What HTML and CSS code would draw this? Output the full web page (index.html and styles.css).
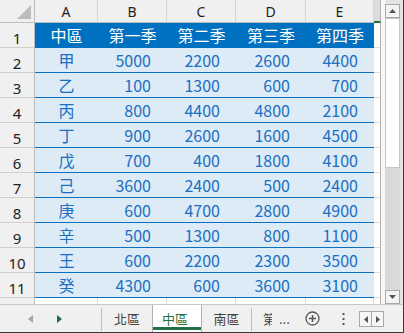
FILE: index.html
```html
<!DOCTYPE html>
<html lang="zh-Hant">
<head>
<meta charset="utf-8">
<link rel="stylesheet" href="styles.css">
</head>
<body>
<div class="app">
  <div class="main">
    <div class="sheet">
      <div class="c ch corner"><svg width="34" height="22" viewBox="0 0 34 22"><polygon points="31,5 31,19 17,19" fill="#bcbcbc"/></svg></div>
      <div class="c ch">A</div><div class="c ch">B</div><div class="c ch">C</div><div class="c ch">D</div><div class="c ch">E</div><div class="c fh"></div>

      <div class="c rh">1</div><div class="c hd">中區</div><div class="c hd">第一季</div><div class="c hd">第二季</div><div class="c hd">第三季</div><div class="c hd">第四季</div><div class="c f"></div>
      <div class="c rh">2</div><div class="c d t">甲</div><div class="c d">5000</div><div class="c d">2200</div><div class="c d">2600</div><div class="c d">4400</div><div class="c f"></div>
      <div class="c rh">3</div><div class="c d t">乙</div><div class="c d">100</div><div class="c d">1300</div><div class="c d">600</div><div class="c d">700</div><div class="c f"></div>
      <div class="c rh">4</div><div class="c d t">丙</div><div class="c d">800</div><div class="c d">4400</div><div class="c d">4800</div><div class="c d">2100</div><div class="c f"></div>
      <div class="c rh">5</div><div class="c d t">丁</div><div class="c d">900</div><div class="c d">2600</div><div class="c d">1600</div><div class="c d">4500</div><div class="c f"></div>
      <div class="c rh">6</div><div class="c d t">戊</div><div class="c d">700</div><div class="c d">400</div><div class="c d">1800</div><div class="c d">4100</div><div class="c f"></div>
      <div class="c rh">7</div><div class="c d t">己</div><div class="c d">3600</div><div class="c d">2400</div><div class="c d">500</div><div class="c d">2400</div><div class="c f"></div>
      <div class="c rh">8</div><div class="c d t">庚</div><div class="c d">600</div><div class="c d">4700</div><div class="c d">2800</div><div class="c d">4900</div><div class="c f"></div>
      <div class="c rh">9</div><div class="c d t">辛</div><div class="c d">500</div><div class="c d">1300</div><div class="c d">800</div><div class="c d">1100</div><div class="c f"></div>
      <div class="c rh">10</div><div class="c d t">王</div><div class="c d">600</div><div class="c d">2200</div><div class="c d">2300</div><div class="c d">3500</div><div class="c f"></div>
      <div class="c rh">11</div><div class="c d t">癸</div><div class="c d">4300</div><div class="c d">600</div><div class="c d">3600</div><div class="c d">3100</div><div class="c f"></div>

      <div class="c rh last"></div><div class="c e"></div><div class="c e"></div><div class="c e"></div><div class="c e"></div><div class="c e"></div><div class="c fe"></div>
    </div>
    <div class="vs">
      <div class="vb"><svg width="7" height="4" viewBox="0 0 7 4"><polygon points="0,4 7,4 3.5,0" fill="#555"/></svg></div>
      <div class="thumb"></div>
      <div class="track"></div>
      <div class="vb"><svg width="7" height="4" viewBox="0 0 7 4"><polygon points="0,0 7,0 3.5,4" fill="#555"/></svg></div>
    </div>
  </div>
  <div class="tabbar">
    <div class="nav">
      <svg class="navl" width="5" height="8" viewBox="0 0 5 8"><polygon points="5,0 5,8 0,4" fill="#a6a6a6"/></svg>
      <svg class="navr" width="5" height="8" viewBox="0 0 5 8"><polygon points="0,0 0,8 5,4" fill="#1e6b3c"/></svg>
    </div>
    <div class="sep"></div>
    <div class="tab">北區</div>
    <div class="tab on">中區</div>
    <div class="tab s">南區</div>
    <div class="sep"></div>
    <div class="clip"><span>第</span></div>
    <div class="more">...</div>
    <svg class="plus" width="15" height="15" viewBox="0 0 15 15"><circle cx="7.5" cy="7.5" r="6.5" fill="none" stroke="#555" stroke-width="1.3"/><path d="M7.5 4v7M4 7.5h7" stroke="#555" stroke-width="1.5"/></svg>
    <svg class="kebab" width="3" height="12" viewBox="0 0 3 12"><rect x="0.5" y="0" width="2" height="2" fill="#555"/><rect x="0.5" y="5" width="2" height="2" fill="#555"/><rect x="0.5" y="10" width="2" height="2" fill="#555"/></svg>
    <div class="sb">
      <div class="sbb"><svg width="4" height="7" viewBox="0 0 4 7"><polygon points="4,0 4,7 0,3.5" fill="#555"/></svg></div>
      <div class="sbb"><svg width="4" height="7" viewBox="0 0 4 7"><polygon points="0,0 0,7 4,3.5" fill="#555"/></svg></div>
    </div>
  </div>
</div>
</body>
</html>
```

FILE: styles.css
```css
* { box-sizing: border-box; margin: 0; padding: 0; }
body { margin: 0; background: #fff; font-family: "Noto Sans CJK TC", "Noto Sans", sans-serif; }
.app { width: 404px; height: 333px; border-right: 1px solid #3a3a3a; border-bottom: 1px solid #3a3a3a; display: flex; flex-direction: column; overflow: hidden; }
.main { display: flex; height: 304px; }
.sheet { display: grid; grid-template-columns: 35px 63px 69px 69px 70px 68px 7px; grid-template-rows: 23px repeat(11, 25px) 6px; width: 381px; }
.c { display: flex; align-items: center; overflow: hidden; white-space: nowrap; }
.ch { background: #f0f0f0; border-right: 1px solid #d4d4d4; border-bottom: 1px solid #bcbcbc; justify-content: center; font-family: "Noto Sans", sans-serif; font-size: 14px; color: #222; }
.corner { border-right-color: #bcbcbc; }
.fh { background: #dcdcdc; border-right: 1px solid #b0b0b0; border-bottom: 2px solid #217346; }
.rh { background: #f0f0f0; border-right: 1px solid #bcbcbc; border-bottom: 1px solid #cfcfcf; justify-content: center; font-family: "Noto Sans", sans-serif; font-size: 15px; color: #222; padding-top: 5px; }
.rh.last { border-bottom: none; }
.hd { background: #0070c0; color: #fff; justify-content: center; font-size: 16px; border-bottom: 1px solid #0070c0; }
.d { background: #ddebf7; color: #1c6fc1; font-size: 16px; border-bottom: 1px solid #0b70c0; justify-content: flex-end; padding-right: 16px; }
.d.t { justify-content: center; padding-right: 0; }
.f { background: #fff; border-right: 1px solid #b0b0b0; border-bottom: 1px solid #dadada; }
.e { background: #fff; border-right: 1px solid #dadada; }
.fe { background: #fff; border-right: 1px solid #b0b0b0; }
.vs { width: 22px; display: flex; flex-direction: column; border-left: 4px solid #f8f8f8; padding: 4px 3px 0 0; background: #e4e4e4; }
.vb { height: 14px; border: 1px solid #a8a8a8; background: #f4f4f4; display: flex; align-items: center; justify-content: center; }
.thumb { height: 150px; background: #fff; border: 1px solid #c4c4c4; }
.track { height: 122px; background: #d9d9d9; }
.tabbar { height: 28px; border-top: 1px solid #c8c8c8; background: #f0f0f0; display: flex; align-items: stretch; font-size: 13px; color: #444; }
.nav { width: 101px; display: flex; align-items: center; padding-left: 28px; }
.navr { margin-left: 24px; }
.sep { width: 1px; background: #bdbdbd; margin: 3px 0 1px; }
.tab { width: 50px; display: flex; justify-content: center; align-items: center; }
.tab.on { background: #fff; border-left: 1px solid #b0b0b0; border-right: 1px solid #b0b0b0; color: #217346; padding-right: 4px; box-shadow: inset 0 -2px 0 #fff, inset 0 -5px 0 #217346; }
.tab.s { width: 49px; }
.clip { display: flex; align-items: center; padding-left: 11px; }
.clip span { display: block; width: 9px; overflow: hidden; white-space: nowrap; }
.more { display: flex; align-items: center; margin-left: 7px; width: 12px; }
.plus { align-self: center; margin-left: 14px; }
.kebab { align-self: center; margin-left: 22px; }
.sb { display: flex; align-self: center; margin-left: 14px; margin-top: 1px; }
.sbb { width: 13px; height: 16px; border: 1px solid #a8a8a8; background: #f6f6f6; display: flex; align-items: center; justify-content: center; }
.sbb + .sbb { margin-left: -1px; }
```
